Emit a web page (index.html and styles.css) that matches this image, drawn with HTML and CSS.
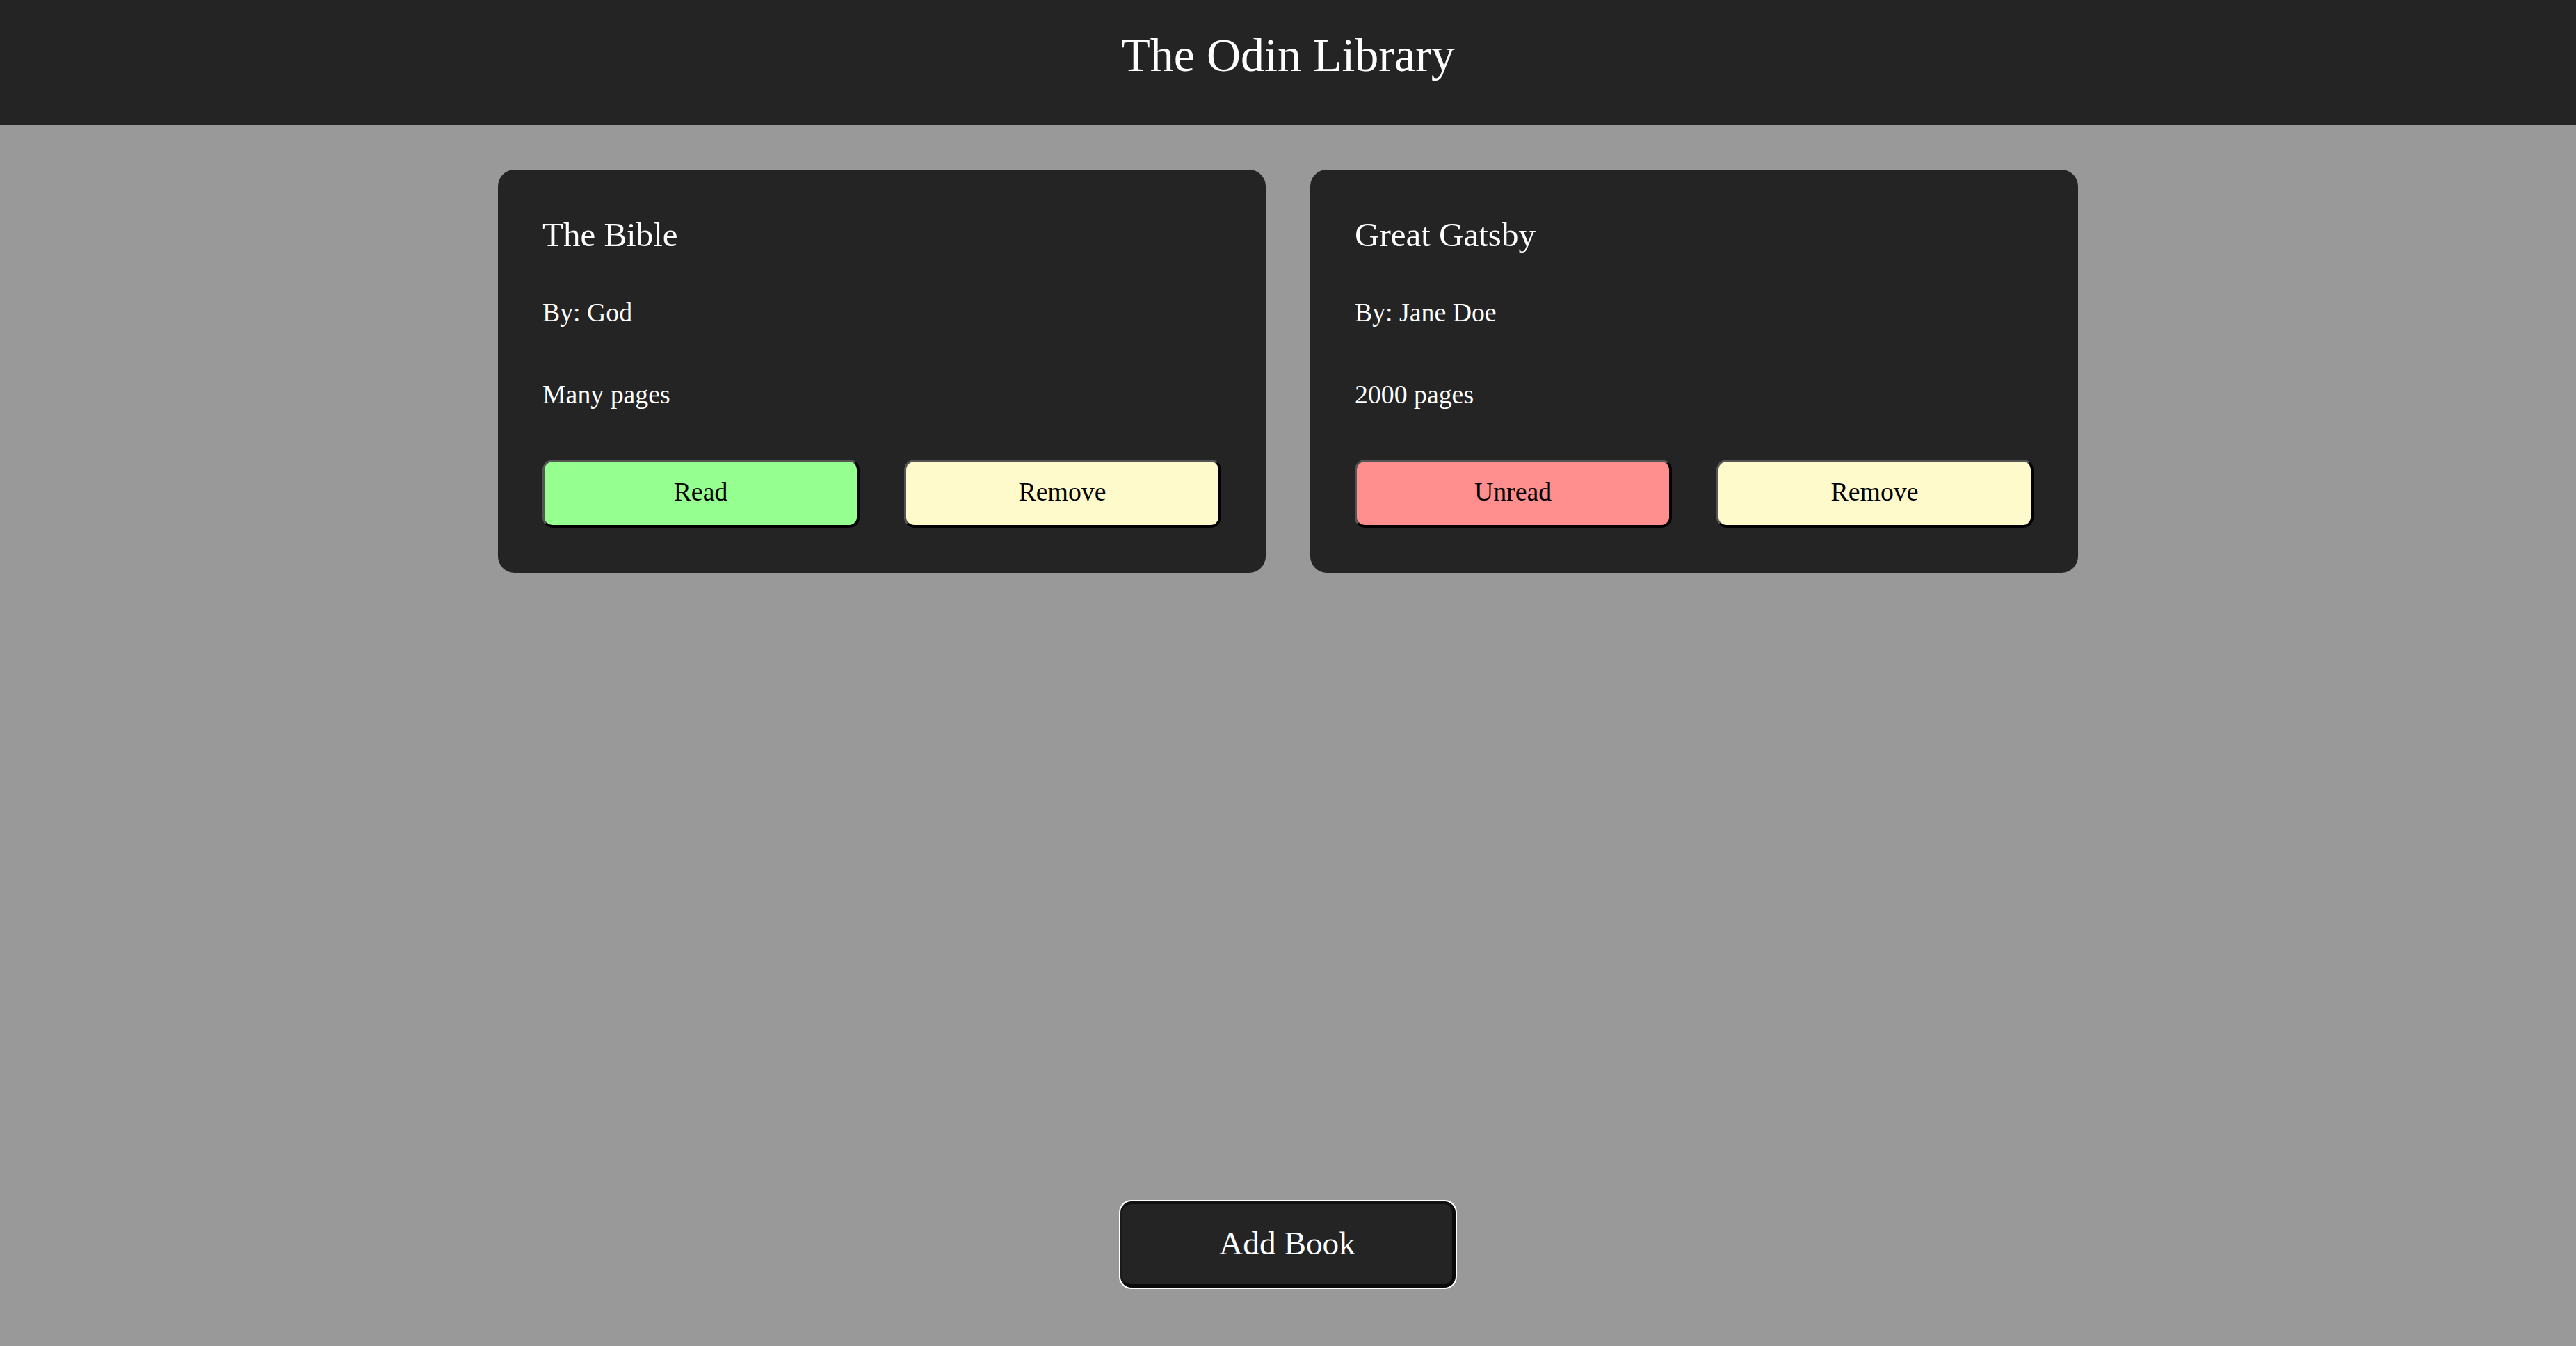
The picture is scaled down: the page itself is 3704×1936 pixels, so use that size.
FILE: index.html
```html
<!DOCTYPE html>
<html lang="en">
<head>
<meta charset="utf-8">
<title>The Odin Library</title>
<link rel="stylesheet" href="styles.css">
</head>
<body>
<header class="site-header">
  <h1 class="site-title">The Odin Library</h1>
</header>
<main class="library">
  <article class="book">
    <h2 class="book-title">The Bible</h2>
    <p class="book-author">By: God</p>
    <p class="book-pages">Many pages</p>
    <div class="book-actions">
      <button class="btn btn-read">Read</button>
      <button class="btn btn-remove">Remove</button>
    </div>
  </article>
  <article class="book">
    <h2 class="book-title">Great Gatsby</h2>
    <p class="book-author">By: Jane Doe</p>
    <p class="book-pages">2000 pages</p>
    <div class="book-actions">
      <button class="btn btn-unread">Unread</button>
      <button class="btn btn-remove">Remove</button>
    </div>
  </article>
</main>
<footer class="site-footer">
  <button class="add-btn">Add Book</button>
</footer>
</body>
</html>
```
FILE: styles.css
```css
* { box-sizing: border-box; }
html, body { margin: 0; padding: 0; }
body {
  min-height: 100vh;
  display: flex;
  flex-direction: column;
  background: #999999;
  font-family: "Liberation Serif", "Times New Roman", serif;
  color: #ffffff;
}
.site-header {
  height: 180px;
  background: #242424;
  padding-top: 40px;
  text-align: center;
}
.site-title {
  margin: 0;
  font-size: 68px;
  font-weight: 400;
  line-height: 78px;
  color: #ffffff;
}
.library {
  flex: 1;
  display: grid;
  grid-template-columns: repeat(2, 1104px);
  column-gap: 64px;
  justify-content: center;
  align-content: start;
  padding-top: 64px;
}
.book {
  background: #242424;
  border-radius: 24px;
  padding: 64px 64px 65px;
  display: flex;
  flex-direction: column;
}
.book-title {
  margin: 0;
  font-size: 49px;
  font-weight: 400;
  line-height: 56px;
  padding-top: 2px;
}
.book-author,
.book-pages {
  margin: 0;
  font-size: 37.8px;
  line-height: 44px;
}
.book-author { margin-top: 61px; }
.book-pages { margin-top: 74px; }
.book-actions {
  margin-top: 72px;
  display: grid;
  grid-template-columns: 1fr 1fr;
  column-gap: 64px;
}
.btn {
  height: 98px;
  padding: 0 0 6px;
  font-family: inherit;
  font-size: 37.8px;
  color: #000000;
  border-radius: 15px;
  border-style: solid;
  border-width: 3px 4px 4px 3px;
  border-color: #555555 #000000 #000000 #555555;
  cursor: pointer;
}
.btn-read { background: #95ff90; }
.btn-unread { background: #ff8e8e; }
.btn-remove { background: #fffacb; }
.site-footer {
  display: flex;
  justify-content: center;
  padding-bottom: 84px;
}
.add-btn {
  width: 482px;
  height: 124px;
  padding: 0 0 4px;
  background: #242424;
  color: #ffffff;
  font-family: inherit;
  font-size: 47.3px;
  border-radius: 16px;
  border-style: solid;
  border-width: 4px 5px 5px 3px;
  border-color: #111111 #0a0a0a #0a0a0a #1a1a1a;
  box-shadow: 0 0 0 2px #ffffff;
  cursor: pointer;
}
```
